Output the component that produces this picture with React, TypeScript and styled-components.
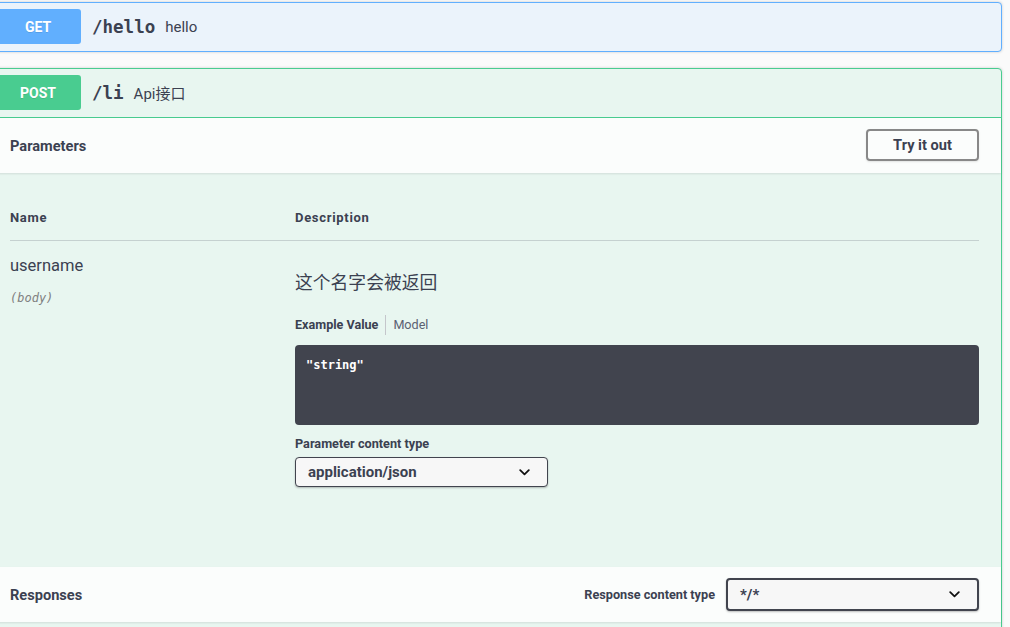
import React from "react";
import styled, { createGlobalStyle } from "styled-components";

const Global = createGlobalStyle`
  html, body { margin: 0; padding: 0; background: #fafafa; overflow: hidden; }
  body { font-family: Roboto, "Noto Sans CJK SC", sans-serif; color: #3b4151; }
  * { box-sizing: border-box; }
`;

const Page = styled.div`
  padding-top: 2px;
  width: 1010px;
  height: 627px;
  overflow: hidden;
`;

const OpBlock = styled.div<{ $color: string; $bg: string }>`
  margin: 0 0 16px -11px;
  width: 1013px;
  border: 1px solid ${(p) => p.$color};
  border-radius: 4px;
  background: ${(p) => p.$bg};
  box-shadow: 0 0 3px rgba(0, 0, 0, 0.19);
`;

const Summary = styled.div<{ $color: string; $open?: boolean }>`
  display: flex;
  align-items: center;
  padding: 6px 5px 7px;
  border-bottom: ${(p) => (p.$open ? `1px solid ${p.$color}` : "none")};
`;

const Method = styled.span<{ $color: string }>`
  width: 86px;
  height: 35px;
  margin-right: 1px;
  display: flex;
  align-items: center;
  justify-content: center;
  border-radius: 3px;
  background: ${(p) => p.$color};
  color: #fff;
  font-family: Roboto, sans-serif;
  font-weight: 700;
  font-size: 14px;
  text-shadow: 0 1px 0 rgba(0, 0, 0, 0.1);
`;

const Path = styled.span`
  padding: 0 10px;
  font-family: "DejaVu Sans Mono", monospace;
  font-weight: 700;
  font-size: 17.5px;
  color: #3b4151;
`;

const SummaryDesc = styled.span`
  font-family: Roboto, "Noto Sans CJK SC", sans-serif;
  font-size: 15px;
  color: #3b4151;
`;

const SectionHeader = styled.div`
  display: flex;
  align-items: center;
  justify-content: space-between;
  min-height: 55px;
  padding: 0 22px 0 20px;
  background: rgba(255, 255, 255, 0.8);
  box-shadow: 0 1px 2px rgba(0, 0, 0, 0.1);
  position: relative;
`;

const SectionTitle = styled.h4`
  margin: 0;
  font-family: Roboto, sans-serif;
  font-size: 14.6px;
  font-weight: 700;
  color: #3b4151;
`;

const TryButton = styled.button`
  width: 113px;
  height: 32px;
  margin-top: -1px;
  border: 2px solid #888;
  border-radius: 4px;
  background: transparent;
  font-family: Roboto, sans-serif;
  font-weight: 700;
  font-size: 14.6px;
  color: #3b4151;
  box-shadow: 0 1px 2px rgba(0, 0, 0, 0.1);
`;

const ParamsBody = styled.div`
  padding: 27px 22px 80px 20px;
`;

const ParamGrid = styled.div`
  display: grid;
  grid-template-columns: 285px 1fr;
`;

const HeadCell = styled.div`
  padding: 10px 0 14px;
  line-height: 16px;
  font-family: Roboto, sans-serif;
  font-size: 13px;
  letter-spacing: 0.7px;
  font-weight: 700;
  color: #3b4151;
  border-bottom: 1px solid rgba(59, 65, 81, 0.2);
`;

const Cell = styled.div`
  padding-top: 15px;
  display: flex;
  flex-direction: column;
  align-items: flex-start;
`;

const ParamName = styled.div`
  font-family: Roboto, sans-serif;
  font-size: 16.5px;
  line-height: 20px;
  color: #3b4151;
`;

const ParamIn = styled.div`
  margin-top: 14px;
  line-height: 16px;
  font-family: "DejaVu Sans Mono", monospace;
  font-style: italic;
  font-size: 12px;
  color: #808080;
`;

const Markdown = styled.p`
  margin: 13px 0 0;
  font-family: "Noto Sans CJK SC", sans-serif;
  font-size: 17.8px;
  line-height: 24px;
  color: #3b4151;
`;

const Tabs = styled.div`
  margin-top: 22px;
  display: flex;
  align-items: center;
  height: 20px;
`;

const Tab = styled.span<{ $active?: boolean }>`
  font-family: Roboto, sans-serif;
  font-size: 12.6px;
  font-weight: ${(p) => (p.$active ? 700 : 400)};
  color: ${(p) => (p.$active ? "#3b4151" : "#5b6172")};
  padding: 0 7px;
  line-height: 20px;
  &:first-child { padding-left: 0; }
  & + & { border-left: 1px solid #c4c6cb; }
`;

const CodeBox = styled.pre`
  margin: 10px 0 0;
  width: 100%;
  height: 80px;
  padding: 12px 11px;
  border-radius: 4px;
  background: #41444e;
  color: #fff;
  font-family: "DejaVu Sans Mono", monospace;
  font-weight: 700;
  font-size: 12px;
  line-height: 16px;
`;

const Label = styled.div`
  margin-top: 11px;
  line-height: 16px;
  font-family: Roboto, sans-serif;
  font-size: 12.7px;
  font-weight: 700;
  color: #3b4151;
`;

const Select = styled.div<{ $w: number; $h: number; $mt?: number }>`
  margin-top: ${(p) => p.$mt ?? 0}px;
  width: ${(p) => p.$w}px;
  height: ${(p) => p.$h}px;
  display: flex;
  align-items: center;
  justify-content: space-between;
  padding: 0 17px 0 12px;
  border: ${(p) => (p.$h > 31 ? 2 : 1)}px solid #41444e;
  border-radius: 4px;
  background: #f7f7f7;
  box-shadow: 0 1px 2px 0 rgba(0, 0, 0, 0.25);
  font-family: Roboto, sans-serif;
  font-weight: 700;
  font-size: 15px;
  color: #3b4151;
`;

const Chevron = () => (
  <svg width="11" height="7" viewBox="0 0 11 7">
    <polyline
      points="1.2,1.2 5.5,5.3 9.8,1.2"
      fill="none"
      stroke="#111"
      strokeWidth="1.8"
      strokeLinecap="round"
      strokeLinejoin="round"
    />
  </svg>
);

const RespRight = styled.div`
  display: flex;
  align-items: center;
  gap: 11px;
`;

const RespLabel = styled.span`
  font-family: Roboto, sans-serif;
  font-size: 12.7px;
  font-weight: 700;
  color: #3b4151;
`;

const Tail = styled.div`
  height: 20px;
`;

export default function App() {
  return (
    <>
      <Global />
      <Page>
        <OpBlock $color="#61affe" $bg="#ebf3fb">
          <Summary $color="#61affe">
            <Method $color="#61affe">GET</Method>
            <Path>/hello</Path>
            <SummaryDesc>hello</SummaryDesc>
          </Summary>
        </OpBlock>

        <OpBlock $color="#49cc90" $bg="#e8f6f0">
          <Summary $color="#49cc90" $open>
            <Method $color="#49cc90">POST</Method>
            <Path>/li</Path>
            <SummaryDesc>Api接口</SummaryDesc>
          </Summary>

          <SectionHeader>
            <SectionTitle>Parameters</SectionTitle>
            <TryButton>Try it out</TryButton>
          </SectionHeader>

          <ParamsBody>
            <ParamGrid>
              <HeadCell>Name</HeadCell>
              <HeadCell>Description</HeadCell>
              <Cell>
                <ParamName>username</ParamName>
                <ParamIn>(body)</ParamIn>
              </Cell>
              <Cell>
                <Markdown>这个名字会被返回</Markdown>
                <Tabs>
                  <Tab $active>Example Value</Tab>
                  <Tab>Model</Tab>
                </Tabs>
                <CodeBox>"string"</CodeBox>
                <Label>Parameter content type</Label>
                <Select $w={253} $h={30} $mt={5}>
                  <span>application/json</span>
                  <Chevron />
                </Select>
              </Cell>
            </ParamGrid>
          </ParamsBody>

          <SectionHeader>
            <SectionTitle>Responses</SectionTitle>
            <RespRight>
              <RespLabel>Response content type</RespLabel>
              <Select $w={253} $h={33}>
                <span>*/*</span>
                <Chevron />
              </Select>
            </RespRight>
          </SectionHeader>
          <Tail />
        </OpBlock>
      </Page>
    </>
  );
}
